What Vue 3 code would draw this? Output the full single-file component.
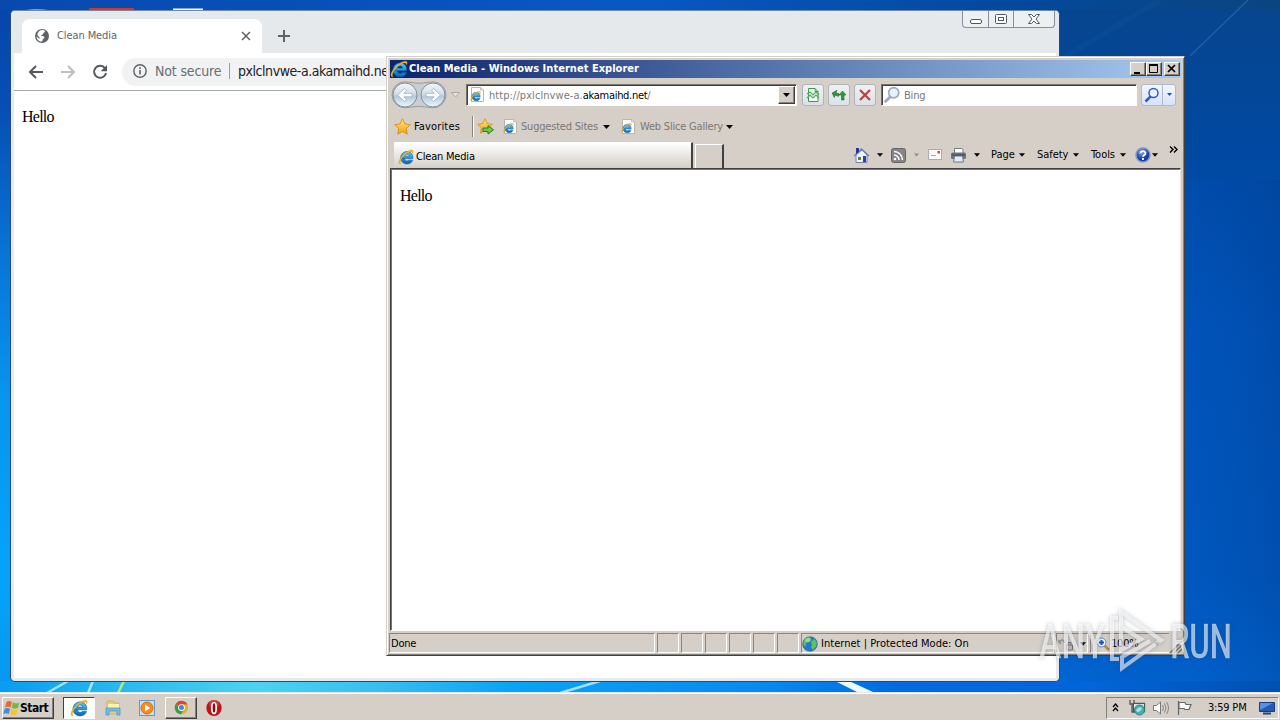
<script setup>
const panels = [1, 2, 3, 4, 5, 6]
</script>

<template>
  <div class="desktop">
    <svg class="wallpaper" viewBox="0 0 1280 720">
      <defs>
        <linearGradient id="wl" x1="0" y1="0" x2="0" y2="1"><stop offset="0" stop-color="#0845aa" /><stop offset=".15" stop-color="#064eb5" /><stop offset=".35" stop-color="#0874d6" /><stop offset=".55" stop-color="#0795ef" /><stop offset=".8" stop-color="#03a4fa" /><stop offset="1" stop-color="#0894ec" /></linearGradient>
        <linearGradient id="wr" x1="0" y1="0" x2="0" y2="1"><stop offset="0" stop-color="#07458d" /><stop offset=".2" stop-color="#0048a0" /><stop offset=".45" stop-color="#0052b7" /><stop offset=".8" stop-color="#0058bd" /><stop offset="1" stop-color="#0267d4" /></linearGradient>
        <linearGradient id="wre" x1="0" x2="1"><stop offset="0" stop-color="#0068d8" stop-opacity=".65" /><stop offset=".6" stop-color="#0055c0" stop-opacity=".2" /><stop offset="1" stop-color="#003f95" stop-opacity=".35" /></linearGradient>
        <linearGradient id="wt" x1="0" x2="1"><stop offset="0" stop-color="#0849ae" /><stop offset=".5" stop-color="#0758c4" /><stop offset=".8" stop-color="#03489b" /><stop offset="1" stop-color="#0b457f" /></linearGradient>
        <linearGradient id="wb" x1="0" x2="1"><stop offset="0" stop-color="#079df1" /><stop offset=".09" stop-color="#27b8ef" /><stop offset=".2" stop-color="#4bd3ef" /><stop offset=".3" stop-color="#37bdf1" /><stop offset=".4" stop-color="#08a4f5" /><stop offset=".6" stop-color="#078aef" /><stop offset=".7" stop-color="#006be0" /><stop offset=".85" stop-color="#0265da" /><stop offset="1" stop-color="#0050b0" /></linearGradient>
      </defs>
      <rect width="1280" height="720" fill="url(#wl)" />
      <rect x="1050" width="230" height="720" fill="url(#wr)" />
      <rect x="1050" y="180" width="230" height="540" fill="url(#wre)" />
      <rect width="1280" height="10" fill="url(#wt)" />
      <rect y="681" width="1280" height="12" fill="url(#wb)" />
      <path d="M1190 56 1248 0" stroke="#4b7fc0" stroke-opacity=".4" stroke-width="1.500" />
      <path d="M1060 60 1160 0" stroke="#1f68bb" stroke-opacity=".12" stroke-width="6" />
      <path d="M47 693 68 681M88 693 93 681M560 693 600 681" stroke="#d4f5ff" stroke-opacity=".75" stroke-width="2.500" />
      <path d="M118 693 124 681" stroke="#b3ee75" stroke-width="2.500" />
      <path d="M835 681h14l24 11h-16z" fill="#e9f9ff" />
      <path d="M26 10q10-2 22 0z" fill="#8aa3c9" /><path d="M89 8h45v3H89z" fill="#dc3525" /><path d="M173 8.500h30v2h-30z" fill="#fff" />
    </svg>

    <section class="chrome">
      <header class="tabstrip">
        <div class="ctab">
          <svg width="16" height="16" viewBox="0 0 16 16"><circle cx="8" cy="8" r="7" fill="#5f6368" /><path d="M7.500 2c2-.3 3 .4 3.600 1.300-.2 1.500-1.800 1.200-2 2.500-.1 1.200-2 .7-1.900 1.700.1.900 2.300.2 3 1.300.6 1.200-.4 2-1.400 2.400l-.7 2.400c-3 .2-5.500-2-5.600-5l3 2.500v-1.600L3.300 7C3.700 4 5.500 2.300 7.500 2z" fill="#fff" /></svg>
          <span class="ctitle">Clean Media</span>
          <svg width="10" height="10" viewBox="0 0 10 10"><path d="m1 1 8 8m0-8L1 9" stroke="#5f6368" stroke-width="1.500" /></svg>
        </div>
        <svg class="plus" width="14" height="14" viewBox="0 0 14 14"><path d="M7 1v12M1 7h12" stroke="#5f6368" stroke-width="2" /></svg>
        <div class="caption">
          <i><svg class="min" width="14" height="8"><rect x="1.500" y="2.500" width="11" height="4" rx="1.500" fill="#fff" stroke="#535666" /></svg></i>
          <i><svg width="14" height="12"><rect x="1.500" y="1.500" width="11" height="9" rx="1" fill="#fff" stroke="#535666" /><rect x="4.500" y="4.500" width="5" height="3" fill="none" stroke="#535666" /></svg></i>
          <i><svg width="14" height="12"><path d="M1.500 1.500h3L7 4l2.500-2.500h3L9 6l3.500 4.500h-3L7 8l-2.500 2.500h-3L5 6z" fill="#fff" stroke="#535666" /></svg></i>
        </div>
      </header>
      <nav class="cnav">
        <svg width="16" height="16" viewBox="0 0 16 16"><path d="M15 8H2.500M8 2 2 8l6 6" fill="none" stroke="#55585d" stroke-width="2" /></svg>
        <svg width="16" height="16" viewBox="0 0 16 16"><path d="M1 8h12.500M8 2l6 6-6 6" fill="none" stroke="#bcbec1" stroke-width="2" /></svg>
        <svg width="16" height="16" viewBox="0 0 16 16"><path d="M13 4.300A6 6 0 1 0 14 9" fill="none" stroke="#55585d" stroke-width="2" /><path d="M15 1v6.300H8.700z" fill="#55585d" /></svg>
        <div class="omni">
          <svg width="16" height="16" viewBox="0 0 16 16"><circle cx="8" cy="8" r="6.200" fill="none" stroke="#5f6368" stroke-width="1.400" /><path d="M8 7v4.500M8 4.300V6" stroke="#5f6368" stroke-width="1.600" /></svg>
          <span class="ns">Not secure</span><b></b><span class="curl">pxlclnvwe-a.akamaihd.net</span>
        </div>
      </nav>
      <main class="page">Hello</main>
    </section>

    <svg class="defs" width="0" height="0">
      <defs>
        <linearGradient id="eb" x1="0" y1="0" x2="0" y2="1"><stop offset="0" stop-color="#58c8f4" /><stop offset="1" stop-color="#0b62b8" /></linearGradient>
        <linearGradient id="star" x1="0" y1="0" x2="0" y2="1"><stop offset="0" stop-color="#ffe979" /><stop offset="1" stop-color="#f0a013" /></linearGradient>
        <linearGradient id="orb" x1="0" y1="0" x2="0" y2="1"><stop offset="0" stop-color="#f2f6f9" /><stop offset=".45" stop-color="#d3dfe9" /><stop offset=".55" stop-color="#b4c8d9" /><stop offset="1" stop-color="#edf8ff" /></linearGradient>
        <radialGradient id="hq" cx=".4" cy=".3"><stop offset="0" stop-color="#7aa5ed" /><stop offset="1" stop-color="#153aa0" /></radialGradient>
        <symbol id="ie" viewBox="0 0 16 16">
          <path d="M3.300 9.600h11.500c.5-4.300-2-7-5.800-7-3.600 0-6.300 2.700-6.300 6.200 0 3.600 2.700 6.200 6.300 6.200 2.700 0 4.900-1.400 5.600-3.800h-3.900c-.4.600-.9.800-1.700.8-1.300 0-2.200-.9-2.400-2.400M6.600 7.200C7 5.900 7.900 5.300 9 5.300s2.100.6 2.300 1.900z" fill="url(#eb)" stroke="#075aa8" stroke-width=".6" fill-rule="evenodd" />
          <path d="M2.800 14.900C.1 15.500.1 12 3.300 8 7 3.200 12.800-.1 14.800 1.400c.8.800.5 2-.2 3.100.1-1.100-.1-1.600-1-1.800-2.200-.4-6.300 2.100-9 5.600-2.300 2.900-3.100 5.500-1.800 6.600z" fill="#f5bd22" stroke="#c98a0c" stroke-width=".3" />
        </symbol>
        <symbol id="iepage" viewBox="0 0 16 16"><path d="M2.500.500h9L14.500 3v11.500h-12z" fill="#fff" stroke="#b4b4b4" /><path d="M11.500.500V3h3" fill="#ddd" stroke="#aaa" stroke-width=".6" /><svg x="1" y="3.500" width="11" height="11"><use href="#ie" /></svg></symbol>
        <symbol id="fav" viewBox="0 0 16 16"><path d="m8 .8 2.300 4.800 5 .7-3.700 3.600.9 5.300L8 12.600l-4.500 2.600.9-5.300L.7 6.300l5-.7z" fill="url(#star)" stroke="#d38c13" stroke-width=".8" /></symbol>
        <symbol id="dn" viewBox="0 0 7 4"><path d="M0 0h7L3.500 4z" /></symbol>
        <symbol id="mag" viewBox="0 0 16 16"><path d="M6.700 9.300 1.500 14.500" stroke="currentColor" stroke-width="2.500" /><circle cx="9.500" cy="6" r="4.500" fill="#e6f2fe" stroke="currentColor" stroke-width="1.500" /></symbol>
      </defs>
    </svg>

    <section class="ie">
      <header class="titlebar">
        <svg width="18" height="18"><use href="#ie" /></svg>
        <span class="ietitle">Clean Media - Windows Internet Explorer</span>
        <i class="cb"><svg width="12" height="10"><path d="M2 9h6" stroke="#000" stroke-width="2" /></svg></i>
        <i class="cb"><svg width="12" height="10"><path d="M1.500 1v7.500h8V1M1 1h9" fill="none" stroke="#000" /><path d="M1 1h9" stroke="#000" stroke-width="2" /></svg></i>
        <i class="cb last"><svg width="12" height="10"><path d="m2 1 7 7m0-7L2 8" stroke="#000" stroke-width="1.700" /></svg></i>
      </header>

      <div class="nav">
        <svg width="56" height="28" viewBox="0 0 56 28">
          <path d="M14 .8q14 3 28 0a13 13 0 0 1 0 26q-14-3-28 0a13 13 0 0 1 0-26z" fill="#c9ccd0" stroke="#9a9ea3" /><circle cx="14" cy="14" r="12" fill="url(#orb)" stroke="#7d8fa0" /><circle cx="42" cy="14" r="12" fill="url(#orb)" stroke="#7d8fa0" />
          <path d="m6.500 14 7-6.500 2 2-2.700 2.800H21v3.500h-8.200l2.700 2.700-2 2z" fill="#fff" stroke="#9cb0c2" stroke-width=".8" /><path d="m49.500 14-7-6.500-2 2 2.700 2.800H35v3.500h8.200l-2.700 2.700 2 2z" fill="#fff" stroke="#9cb0c2" stroke-width=".8" />
        </svg>
        <svg class="hist" width="9" height="6"><path d="M.5.500h8l-4 4.500z" fill="#e7e4df" stroke="#aaa7a1" /></svg>
        <div class="addr">
          <svg width="16" height="16"><use href="#iepage" /></svg>
          <span class="url">http://pxlclnvwe-a.<em>akamaihd.net</em>/</span>
          <i class="drop"><svg width="7" height="4"><use href="#dn" /></svg></i>
        </div>
        <i class="tb"><svg width="16" height="16"><path d="M3.500 1.500h6.500l3 3v10h-9.500z" fill="#f5fff5" stroke="#369b4b" /><path d="M10 1.500v3h3" fill="none" stroke="#369b4b" /><path d="m2 7 3-2 3 3 3-3 3 3M2 11l3-3 3 3 3-3 3 3" fill="none" stroke="#55a866" stroke-width="1.200" /></svg></i>
        <i class="tb"><svg width="16" height="16"><path d="M1 7 4.500 3v2.500H8V8H4.500v2.500z" fill="#2f983b" stroke="#176e24" stroke-width=".6" transform="rotate(20 4 7)" /><path d="m8 8 3.500-4L15 8h-2v5h-2.500V8z" fill="#2f983b" stroke="#176e24" stroke-width=".6" /></svg></i>
        <i class="tb"><svg width="16" height="16"><path d="m3 3 10 10m0-10L3 13" stroke="#ba3f3f" stroke-width="2.200" /></svg></i>
        <div class="search"><svg class="lens" width="18" height="18"><use href="#mag" /></svg><span>Bing</span></div>
        <div class="go"><i><svg class="blue" width="16" height="16"><use href="#mag" /></svg></i><i><svg width="5" height="3" fill="#174eb4"><use href="#dn" /></svg></i></div>
      </div>

      <div class="favs">
        <svg width="17" height="17"><use href="#fav" /></svg><span class="favlabel">Favorites</span><b></b>
        <svg width="18" height="17" viewBox="0 0 18 17"><svg width="16" height="16"><use href="#fav" /></svg><path d="M6 10h5V7.500l5.500 4.300L11 16v-2.500H6z" fill="#68cb45" stroke="#23822a" /></svg>
        <svg width="16" height="16"><use href="#iepage" /></svg><span class="dim">Suggested Sites</span><svg width="7" height="4"><use href="#dn" /></svg>
        <svg width="16" height="16"><use href="#iepage" /></svg><span class="dim">Web Slice Gallery</span><svg width="7" height="4"><use href="#dn" /></svg>
      </div>

      <div class="tabs">
        <div class="tab"><svg width="16" height="16"><use href="#ie" /></svg><span>Clean Media</span></div>
        <div class="newtab"></div>
        <div class="cmd">
          <svg width="17" height="17" viewBox="0 0 17 17"><path d="M3 8v7.500h11V8L9 3z" fill="#edf2ff" stroke="#7482ac" /><path d="m1 9 7.500-7L16 9" fill="none" stroke="#7280bd" stroke-width="1.500" /><path d="M3 1h3v4L3 7z" fill="#2634a7" /><path d="M5 10h3v3H5z" fill="#59862f" /><path d="M10 9h3v6h-3z" fill="#27459c" /></svg>
          <svg width="6" height="4"><use href="#dn" /></svg>
          <svg width="15" height="15"><rect x=".5" y=".5" width="14" height="14" rx="2" fill="#858585" stroke="#666" /><circle cx="4" cy="11" r="1.300" fill="#fff" /><path d="M3 7a5 5 0 0 1 5 5M3 3.500A8.500 8.500 0 0 1 11.500 12" fill="none" stroke="#fff" stroke-width="1.500" /></svg>
          <svg width="5" height="4" fill="#8d8982"><use href="#dn" /></svg>
          <svg class="mail" width="14" height="11"><rect x=".5" y=".5" width="13" height="10" fill="#fafafa" stroke="#a7adb8" /><path d="M9.500 2h2.500v2.500H9.500z" fill="#d64848" /><path d="M3 6.500h5" stroke="#aaa" /></svg>
          <svg width="17" height="16"><path d="M4.500 6V1.500h7l1.500 1V6" fill="#fff" stroke="#777" /><rect x="1" y="5.500" width="15" height="6.500" rx="1.500" fill="#697584" /><path d="M4.500 9h8l1 6h-10z" fill="#e1ebf8" stroke="#6e7782" /><path d="M2 8h13" stroke="#3c444f" /></svg>
          <svg width="6" height="4"><use href="#dn" /></svg>
          <span>Page</span><svg width="6" height="4"><use href="#dn" /></svg>
          <span>Safety</span><svg width="6" height="4"><use href="#dn" /></svg>
          <span>Tools</span><svg width="6" height="4"><use href="#dn" /></svg>
          <svg width="16" height="16"><circle cx="8" cy="8" r="7" fill="url(#hq)" stroke="#8395bd" stroke-width="1.500" /><path d="M5.500 6.300C5.600 3.500 10.500 3.500 10.500 6.200 10.500 8 8 8 8 9.800M8 11v2" fill="none" stroke="#fff" stroke-width="1.800" /></svg>
          <svg width="6" height="4"><use href="#dn" /></svg>
          <svg class="more" width="9" height="7"><path d="m1 .5 3 3-3 3m4-6 3 3-3 3" fill="none" stroke="#000" stroke-width="1.400" /></svg>
        </div>
      </div>

      <main class="content">Hello</main>

      <footer class="status">
        <div class="done">Done</div>
        <div v-for="p in panels" :key="p"></div>
        <div class="zone"><svg width="16" height="16"><circle cx="8" cy="8" r="7.300" fill="#2877ca" stroke="#21588f" stroke-width=".6" /><path d="M2 5C4 1 8 .5 9 2.500L7 6l-3 1-.5 4C1 9 1 7 2 5zM9 6l3-3c3 2 3.500 6 1.500 8L11 14l-2-3 1-2z" fill="#5bc653" /><ellipse cx="6" cy="4" rx="3" ry="2" fill="#fff" opacity=".35" /></svg><span>Internet | Protected Mode: On</span></div>
        <div class="lock"><svg width="16" height="16"><path d="M1 7q3-6 6 0M0 4l3 4" fill="none" stroke="#999" stroke-width="2" /><path d="M8.500 9h6v5h-6zM10 9V6.500h3V9" fill="#bbb" stroke="#777" /></svg><svg width="6" height="4"><use href="#dn" /></svg></div>
        <div class="zoom"><svg width="14" height="14"><path d="m8 8 5 5" stroke="#bd8642" stroke-width="2.500" /><circle cx="5.500" cy="5.500" r="4.500" fill="#e5f2ff" stroke="#6385c2" /><path d="M5.500 3v5M3 5.500h5" stroke="#1656bd" stroke-width="2" /></svg><span>100%</span><svg width="6" height="4" fill="#555"><use href="#dn" /></svg></div>
        <svg class="grip" width="13" height="13"><path d="M1 13 13 1M5 13l8-8M9 13l4-4" stroke="#77736c" stroke-width="1.500" /></svg>
      </footer>
    </section>

    <footer class="taskbar">
      <button class="start"><svg width="18" height="18" viewBox="0 0 18 18"><path d="M3.500 3Q6 1 9 3L7.500 8.500q-3-1.500-5.500 0z" fill="#e8682d" /><path d="M10 3.300q3 2 6.500.2L15 9q-3.500 1.500-6.500-.2z" fill="#78b841" /><path d="M1.700 9.500q2.800-1.300 5.500.2L5.700 15Q3 13.500.3 15z" fill="#3f8fdb" /><path d="M8.200 10q3 1.700 6.500.3L13.200 16q-3.500 1-6.500-.8z" fill="#f5c436" /></svg><span>Start</span></button>
      <i class="task active"><svg width="18" height="18"><use href="#ie" /></svg></i>
      <i class="task plain"><svg width="18" height="18"><path d="M3 2h6l1 2h5v11H3z" fill="#e9cf70" stroke="#caa84a" stroke-width=".7" /><path d="M4 5h11v4H4z" fill="#fff3b1" /><path d="M2 9h14v7h-3v-4H5v4H2z" fill="#77bce7" stroke="#4b90c2" stroke-width=".7" /></svg></i>
      <i class="task plain"><svg width="18" height="18"><rect x="1.500" y="1.500" width="15" height="15" fill="#c8def5" stroke="#6797cb" /><circle cx="9" cy="9" r="6" fill="#f68c1c" stroke="#dc7109" /><path d="m7 5.500 5 3.500-5 3.500z" fill="#fff" /></svg></i>
      <i class="task raised"><svg width="15" height="15" viewBox="0 0 16 16"><circle cx="8" cy="8" r="7.200" fill="#ddb62b" /><path d="M8 8 1.700 4.500A7.200 7.200 0 0 1 14.300 4.700H8z" fill="#dc4437" /><path d="M1.700 4.500A7.200 7.200 0 0 0 7.500 15.200L10.800 9.700 8 8z" fill="#379b4c" /><circle cx="8" cy="8" r="3.600" fill="#fff" /><circle cx="8" cy="8" r="2.700" fill="#4384e9" /></svg></i>
      <i class="task plain"><svg width="18" height="18"><ellipse cx="9" cy="9" rx="7.700" ry="8" fill="#bd151b" /><ellipse cx="9" cy="5" rx="5" ry="4" fill="#ea6565" opacity=".45" /><ellipse cx="9" cy="9" rx="2.200" ry="5.500" fill="#8b0910" stroke="#fff" stroke-width="1.700" /></svg></i>
      <div class="tray">
        <svg width="7" height="9"><path d="m1 4 2.500-3L6 4M1 8l2.500-3L6 8" fill="none" stroke="#000" stroke-width="1.300" /></svg>
        <svg width="18" height="17"><path d="M2 1v4h4V1M4 5v8h3M5.500 4.500h11v8h-11z" fill="none" stroke="#555" stroke-width="1.300" /><path d="M6 5h10v7H6z" fill="#e2e3e1" /><circle cx="11.500" cy="11" r="5" fill="#4aaeb4" stroke="#278188" /><path d="M8 11q3-4 6-2-1 4-5 4z" fill="#abe1df" /></svg>
        <svg width="18" height="16"><path d="M1.500 5.500h3L8.500 2v12l-4-3.500h-3z" fill="#fafafa" stroke="#777" /><path d="M10.500 5q2 3 0 6M12.500 3.500q3 4.500 0 9M14.500 2q4 6 0 12" fill="none" stroke="#888" /></svg>
        <svg width="17" height="16"><path d="M2.500 1v14M3 2.500h6l1 2h5l-2 5H9l-1-1H3z" fill="#fafafa" stroke="#666" stroke-width="1.200" /></svg>
        <span>3:59 PM</span>
        <svg width="16" height="15"><path d="M.5 2.500h15v9H.5z" fill="#245bb7" stroke="#173b80" /><path d="m1 10 13-7H1z" fill="#5a91de" /><path d="M4 13.500h8" stroke="#29416d" stroke-width="2" /></svg>
      </div>
    </footer>

    <svg class="mark" width="250" height="86" viewBox="1030 597 250 86">
      <g font-family="Roboto, 'Liberation Sans', sans-serif" font-size="49" font-weight="400">
        <text x="1039" y="658" textLength="66" lengthAdjust="spacingAndGlyphs">ANY</text>
        <text x="1170" y="658" textLength="62" lengthAdjust="spacingAndGlyphs">RUN</text>
      </g>
      <path d="M1118 618H1112V659H1119M1121 630V612L1161 640 1122 668V657L1150 641M1121 630V650L1141 639 1121 627" fill="none" />
    </svg>
  </div>
</template>

<style>
body { margin: 0; overflow: hidden; }
</style>

<style scoped>
.desktop { position: relative; width: 1280px; height: 720px; overflow: hidden; font: 11px/14px "DejaVu Sans Condensed", "DejaVu Sans", sans-serif; font-stretch: condensed; letter-spacing: -.2px; color: #000; white-space: nowrap; }
.desktop * { box-sizing: border-box; }
svg { display: block; flex: none; }
i, em { font-style: normal; }
.wallpaper { position: absolute; inset: 0; width: 1280px; height: 720px; }
.defs { position: absolute; }
.chrome { position: absolute; left: 10px; top: 10px; width: 1050px; height: 672px; background: #fff; border: 1px solid #254d70; border-top-color: #75899e; border-radius: 5px; overflow: hidden; box-shadow: inset 3px 0 #e7e9ec, inset -3px 0 #e7e9ec, inset 0 -3px #e7e9ec; }
.tabstrip { height: 42px; background: #e6e9ec; display: flex; padding-left: 11px; }
.ctab { margin-top: 8px; width: 240px; height: 34px; background: #fff; border-radius: 8px 8px 0 0; display: grid; grid-template-columns: 23px 184px 10px; align-items: center; padding-left: 12px; }
.ctitle { font-size: 11px; color: #5f6368; letter-spacing: -.1px; }
.plus { margin: 18px 0 0 15px; }
.caption { margin-left: auto; margin-right: 4px; width: 93px; height: 17px; border: 1px solid #898e9b; border-top: 0; border-radius: 0 0 4px 4px; display: grid; grid-template-columns: 25px 25px 1fr; background: #edf0f2; }
.caption i { display: flex; align-items: center; justify-content: center; }
.caption i + i { border-left: 1px solid #898e9b; }
.min { margin-top: 3px; }
.cnav { height: 38px; margin: 0 3px; border-bottom: 1px solid #a9abaa; display: grid; grid-template-columns: 32px 32px 30px 1fr; align-items: center; padding-left: 14px; }
.omni { height: 28px; margin-right: 80px; background: #f0f2f4; border-radius: 14px; display: grid; grid-template-columns: 23px 74px 9px 1fr; align-items: center; padding: 0 0 1px 10px; font-size: 14px; }
.omni b { height: 16px; width: 1px; background: #999da1; }
.ns { color: #6a6e73; letter-spacing: -.15px; }
.curl { letter-spacing: -.45px; color: #202124; }
.page, .content { font: 16px/18px "Liberation Serif", serif; letter-spacing: -.75px; }
.page { padding: 17px 11px; }
.ie { position: absolute; left: 386px; top: 56px; width: 799px; height: 600px; background: #d5cfc8; border: 1px solid; border-color: #d5cfc8 #404040 #404040 #d5cfc8; box-shadow: inset 1px 1px #fff, inset -1px -1px #858179; padding: 3px; }
.titlebar { height: 18px; display: flex; align-items: center; background: linear-gradient(90deg, #0b246b, #a6caf0); }
.ietitle { color: #fff; font-weight: bold; letter-spacing: .03px; margin-left: 1px; flex: 1; }
.cb { width: 16px; height: 14px; background: #d5cfc8; border: 1px solid; border-color: #fff #404040 #404040 #fff; box-shadow: inset -1px -1px #858179; padding: 1px; }
.last { margin: 0 1px 0 2px; }
.nav { height: 33px; display: grid; grid-template-columns: 59px 16px 336px 26px 26px 27px 260px 36px; align-items: center; padding: 0 0 0 1px; }
.hist { margin-left: 1px; }
.addr { width: 331px; height: 22px; border: 1px solid; border-color: #77736d #fff #fff #77736d; box-shadow: inset 1px 1px #404040; background: #fff; display: grid; grid-template-columns: 20px 1fr 17px; align-items: center; padding: 1px 1px 1px 2px; }
.url { color: #7b7b7b; letter-spacing: .07px; padding-top: 2px; }
.url em { color: #000; letter-spacing: -.3px; }
.drop { height: 18px; display: flex; align-items: center; justify-content: center; background: #d5cfc8; border: 1px solid; border-color: #fff #404040 #404040 #fff; box-shadow: inset -1px -1px #858179; }
.tb { width: 22px; height: 22px; border: 1px solid #b1b3bb; border-radius: 3px; background: linear-gradient(#f0f1f4, #dce0e8); padding: 2px; }
.search { width: 256px; height: 22px; border: 1px solid; border-color: #77736d #fff #fff #77736d; box-shadow: inset 1px 1px #404040; background: #fff; display: flex; align-items: center; gap: 3px; padding-left: 1px; color: #777; }
.search span { padding-top: 2px; }
.lens { color: #9baabd; }
.go { width: 35px; height: 22px; border: 1px solid #aeb9d2; border-radius: 3px; display: grid; grid-template-columns: 20px 1fr; background: linear-gradient(#f3f6ff, #d7e2fa); }
.go i { display: flex; align-items: center; justify-content: center; }
.go i + i { border-left: 1px solid #aeb9d2; }
.blue { color: #285dc5; }
.favs { height: 31px; display: grid; grid-template-columns: 20px 58px 5px 25px 19px 82px 17px 20px 86px 7px; align-items: center; padding: 0 0 0 4px; }
.favs b { width: 2px; height: 21px; border-left: 1px solid #85817b; border-right: 1px solid #fff; }
.favlabel { letter-spacing: .15px; }
.dim { color: #7c7873; padding-top: 1px; }
.tabs { height: 26px; display: grid; grid-template-columns: 301px 158px 1fr; padding-left: 4px; align-items: end; }
.tab { width: 299px; height: 26px; display: flex; align-items: center; gap: 2px; padding: 2px 0 0 4px; background: linear-gradient(#fff, #e7e4df 55%, #d5cfc8); border-right: 2px solid #404040; border-top: 1px solid #fff; }
.newtab { width: 29px; height: 24px; border: 1px solid #fff; border-right: 2px solid #404040; border-bottom: 0; }
.cmd { align-self: center; display: grid; grid-template-columns: 24px 14px 23px 14px 22px 24px 17px 28px 18px 36px 18px 29px 15px 17px 17px 9px; align-items: center; letter-spacing: -.05px; }
.mail { margin-top: -1px; }
.more { margin-top: -12px; }
.content { height: 463px; background: #fff; border: 1px solid; border-color: #404040 #e8e5e0 #fff #404040; padding: 18px 9px; box-shadow: inset 1px 1px #77736d; }
.status { height: 23px; padding: 2px 0 1px; margin-left: -1px; display: grid; grid-template-columns: 268px repeat(6, 24px) 255px 34px 79px 1fr; }
.status > div { border: 1px solid; border-color: #8b867f #fff #fff #8b867f; margin-right: 2px; display: flex; align-items: center; padding-top: 1px; }
.done { padding-left: 1px; }
.zone { gap: 3px; letter-spacing: .03px; }
.status > .lock { gap: 6px; padding-left: 1px; }
.status > .zoom { padding-left: 5px; margin: 0; border-right: 0; }
.zoom span { margin: 0 15px 0 1px; }
.grip { align-self: end; }
.taskbar { position: absolute; left: 0; right: 0; bottom: 0; height: 28px; background: #d5cfc8; border-top: 1px solid #e8e5e0; box-shadow: inset 0 1px #fff; display: flex; align-items: center; padding: 2px 1px 0 2px; }
.start { width: 52px; height: 22px; padding: 0; background: #d5cfc8; border: 1px solid; border-color: #fff #404040 #404040 #fff; box-shadow: inset -1px -1px #858179; display: flex; align-items: center; font: bold 12px/14px "DejaVu Sans Condensed", "DejaVu Sans", sans-serif; font-stretch: condensed; letter-spacing: -.5px; margin-right: 9px; }
.start span { margin-left: -1px; }
.task { height: 22px; display: flex; align-items: center; justify-content: center; }
.active { width: 32px; background: #fff; border: 1px solid; border-color: #404040 #fff #fff #404040; margin-right: 1px; }
.plain { width: 34px; }
.raised { width: 32px; border: 1px solid; border-color: #fff #404040 #404040 #fff; box-shadow: inset -1px -1px #858179; margin-left: 1px; }
.tray { margin-left: auto; width: 173px; height: 22px; border: 1px solid; border-color: #858179 #fff #fff #858179; display: grid; grid-template-columns: 16px 24px 24px 32px 51px 16px; align-items: center; padding-left: 5px; }
.mark { position: absolute; left: 1030px; top: 597px; fill: #fff; fill-opacity: .6; stroke: #fff; stroke-opacity: .45; stroke-width: .7; filter: drop-shadow(0 0 2px rgba(50, 60, 80, .5)); }
.mark path { stroke: #fff; stroke-opacity: .6; stroke-width: 4; }
</style>
